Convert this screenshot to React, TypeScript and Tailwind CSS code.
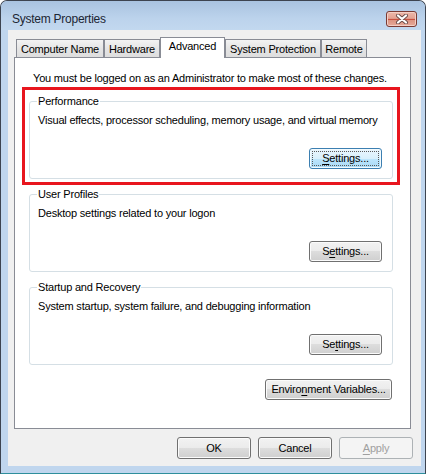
import React from 'react'

const tabs = [
    { label: 'Computer Name', w: 'w-[88px]' },
    { label: 'Hardware', w: 'w-[56px]' },
    { label: 'Advanced', w: 'w-[65px]', active: true },
    { label: 'System Protection', w: 'w-[96px]' },
    { label: 'Remote', w: 'w-[46px]' },
]

type ButtonProps = {
    children: React.ReactNode
    className?: string
    focused?: boolean
    disabled?: boolean
}

const DialogButton = ({ children, className = '', focused, disabled }: ButtonProps) => {
    const skin = disabled
        ? 'border-[#adb2b5] bg-[#f4f4f4] text-[#a0a0a0]'
        : focused
        ? 'border-[#3c7fb1] bg-[linear-gradient(#eaf6fd_0%,#d9f0fc_50%,#bee6fd_50%,#a7d9f5_100%)] shadow-[inset_0_0_0_1px_#f4fbfe] text-black'
        : 'border-[#707070] bg-[linear-gradient(#f2f2f2_0%,#ebebeb_50%,#dddddd_50%,#cfcfcf_100%)] shadow-[inset_0_0_0_1px_#fbfbfb] text-black'
    return (
        <div className={`flex rounded-[3px] border ${skin} ${className}`}>
            <span
                className={`flex flex-1 items-center justify-center m-[2px] leading-[13px] border ${
                    focused ? 'border-dotted border-[#5a5a5a]' : 'border-transparent'
                }`}
            >
                {children}
            </span>
        </div>
    )
}

type GroupProps = {
    title: string
    text: string
    children: React.ReactNode
    className?: string
}

const GroupBox = ({ title, text, children, className = '' }: GroupProps) => {
    return (
        <fieldset
            className={`w-[364px] rounded-[3px] border border-[#d5dfe5] pl-[8px] pr-[10px] pt-[6px] pb-[9px] ${className}`}
        >
            <legend className="-ml-px px-px leading-[13px]">{title}</legend>
            <div className="leading-[13px]">{text}</div>
            <div className="flex justify-end mt-[21px]">{children}</div>
        </fieldset>
    )
}

const CloseButton = () => (
    <div className="w-[31px] h-[16px] mt-[10px] rounded-[3px] border border-[#7a3a33] bg-[linear-gradient(#edb8aa_0%,#e3a292_46%,#c8503f_50%,#c8503f_54%,#dc9482_58%,#e6a999_100%)] shadow-[inset_0_0_0_1px_#f3cfc5] flex items-center justify-center">
        <svg width="14" height="10" viewBox="0 0 14 10">
            <path d="M3 1.5 L11 8.5 M11 1.5 L3 8.5" stroke="#6a4a46" strokeWidth="4" strokeLinecap="round" />
            <path d="M3 1.5 L11 8.5 M11 1.5 L3 8.5" stroke="#ffffff" strokeWidth="2.2" strokeLinecap="round" />
        </svg>
    </div>
)

export default function App() {
    return (
        <div className="w-[426px] h-[474px] bg-white text-[11px] tracking-[-0.2px] text-black font-['Liberation_Sans',Arial,sans-serif]">
            <div className="flex flex-col h-full rounded-t-[7px] border border-[#3d4450] border-b-[#2e8f9c] bg-[#c0d6ee]">
                {/* caption */}
                <div className="flex justify-between h-[29px] pl-[11px] pr-[8px] rounded-t-[6px] bg-[linear-gradient(#a9c3e0,#bcd3ec_60%,#c2d8ef)]">
                    <div className="pt-[11px] text-[12px] leading-[15px] tracking-[-0.25px] text-[#1c2633]">
                        System Properties
                    </div>
                    <CloseButton />
                </div>

                {/* client area */}
                <div className="flex flex-col h-[436px] ml-[7px] mr-[4px] bg-[#f0f0f0] pl-[6px] pr-[8px] pt-[7px]">
                    <div className="flex items-end h-[20px] pl-[2px] relative z-10">
                        {tabs.map((t) =>
                            t.active ? (
                                <div
                                    key={t.label}
                                    className={`${t.w} h-[21px] -mb-px border border-b-0 border-[#898c95] bg-white text-center pt-[2px] leading-[13px]`}
                                >
                                    {t.label}
                                </div>
                            ) : (
                                <div
                                    key={t.label}
                                    className={`${t.w} h-[18px] border border-b-0 border-[#898c95] bg-[linear-gradient(#f3f3f3,#e5e5e5_50%,#dedede)] text-center pt-[3px] leading-[13px]`}
                                >
                                    {t.label}
                                </div>
                            )
                        )}
                    </div>

                    <div className="relative w-[397px] h-[372px] border border-[#898c95] bg-white px-[14px] pt-[14px]">
                        <div className="ml-[4px] leading-[13px]">
                            You must be logged on as an Administrator to make most of these changes.
                        </div>

                        <GroupBox
                            className="mt-[10px]"
                            title="Performance"
                            text="Visual effects, processor scheduling, memory usage, and virtual memory"
                        >
                            <DialogButton focused className="w-[73px] h-[21px]">
                                <span>
                                    <span className="underline underline-offset-2">S</span>ettings...
                                </span>
                            </DialogButton>
                        </GroupBox>

                        <GroupBox
                            className="mt-[9px]"
                            title="User Profiles"
                            text="Desktop settings related to your logon"
                        >
                            <DialogButton className="w-[73px] h-[21px]">
                                <span>
                                    S<span className="underline underline-offset-2">e</span>ttings...
                                </span>
                            </DialogButton>
                        </GroupBox>

                        <GroupBox
                            className="mt-[9px]"
                            title="Startup and Recovery"
                            text="System startup, system failure, and debugging information"
                        >
                            <DialogButton className="w-[73px] h-[21px]">
                                <span>
                                    Se<span className="underline underline-offset-2">t</span>tings...
                                </span>
                            </DialogButton>
                        </GroupBox>

                        <div className="flex justify-end w-[364px] pr-[1px] mt-[14px]">
                            <DialogButton className="w-[127px] h-[21px]">
                                <span>
                                    Enviro<span className="underline underline-offset-2">n</span>ment Variables...
                                </span>
                            </DialogButton>
                        </div>

                        {/* red highlight drawn around the Performance group */}
                        <div className="absolute left-[7px] top-[29px] w-[378px] h-[98px] border-[3px] border-[#e8161e] pointer-events-none" />
                    </div>

                    <div className="flex justify-end gap-[7px] mt-[8px]">
                        <DialogButton className="w-[74px] h-[22px]">OK</DialogButton>
                        <DialogButton className="w-[74px] h-[22px]">Cancel</DialogButton>
                        <DialogButton disabled className="w-[74px] h-[22px]">
                            <span>
                                <span className="underline underline-offset-2">A</span>pply
                            </span>
                        </DialogButton>
                    </div>
                </div>
            </div>
        </div>
    )
}
